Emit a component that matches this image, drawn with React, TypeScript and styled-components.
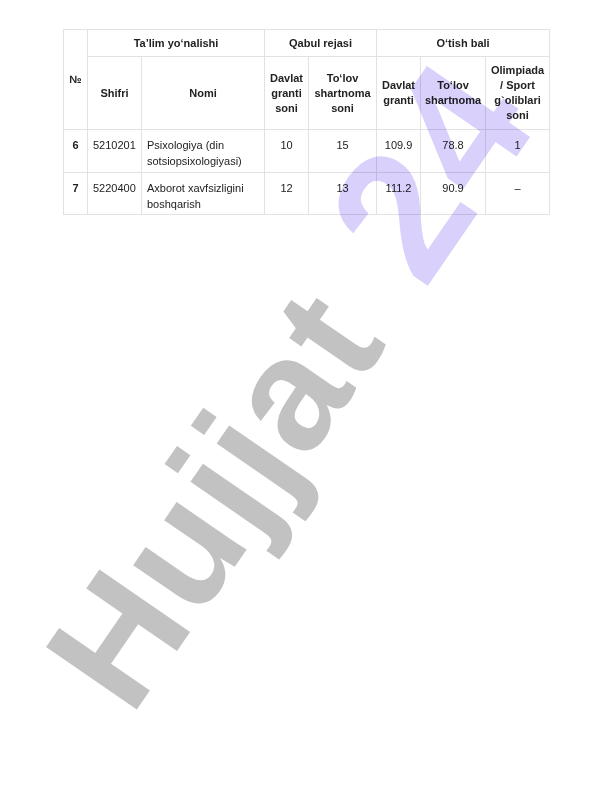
import React from "react";
import styled, { createGlobalStyle } from "styled-components";

interface Row {
  no: string;
  code: string;
  name: string;
  stateQuota: string;
  paidQuota: string;
  stateScore: string;
  paidScore: string;
  olympiad: string;
}

const rows: Row[] = [
  {
    no: "6",
    code: "5210201",
    name: "Psixologiya (din sotsiopsixologiyasi)",
    stateQuota: "10",
    paidQuota: "15",
    stateScore: "109.9",
    paidScore: "78.8",
    olympiad: "1",
  },
  {
    no: "7",
    code: "5220400",
    name: "Axborot xavfsizligini boshqarish",
    stateQuota: "12",
    paidQuota: "13",
    stateScore: "111.2",
    paidScore: "90.9",
    olympiad: "–",
  },
];

// ustun kengliklari (jami 486px)
const colWidths = [24, 54, 123, 44, 68, 44, 65, 64];

export default function App() {
  return (
    <>
      <GlobalStyle />
      <S.Page>
        <S.Table>
          <colgroup>
            {colWidths.map((w, i) => (
              <col key={i} style={{ width: w }} />
            ))}
          </colgroup>
          <thead>
            <S.TopHeadRow>
              <S.Head rowSpan={2}>№</S.Head>
              <S.Head colSpan={2}>Ta’lim yoʻnalishi</S.Head>
              <S.Head colSpan={2}>Qabul rejasi</S.Head>
              <S.Head colSpan={3}>Oʻtish bali</S.Head>
            </S.TopHeadRow>
            <S.SubHeadRow>
              <S.Head>Shifri</S.Head>
              <S.Head>Nomi</S.Head>
              <S.Head>Davlat granti soni</S.Head>
              <S.Head>Toʻlov shartnoma soni</S.Head>
              <S.Head>Davlat granti</S.Head>
              <S.Head>Toʻlov shartnoma</S.Head>
              <S.Head>Olimpiada / Sport g`oliblari soni</S.Head>
            </S.SubHeadRow>
          </thead>
          <tbody>
            {rows.map((r, i) => (
              <S.BodyRow key={r.code} tall={i === 0}>
                <S.Cell align="center" bold>
                  {r.no}
                </S.Cell>
                <S.Cell>{r.code}</S.Cell>
                <S.Cell>{r.name}</S.Cell>
                <S.Cell align="center">{r.stateQuota}</S.Cell>
                <S.Cell align="center">{r.paidQuota}</S.Cell>
                <S.Cell align="center">{r.stateScore}</S.Cell>
                <S.Cell align="center">{r.paidScore}</S.Cell>
                <S.Cell align="center">{r.olympiad}</S.Cell>
              </S.BodyRow>
            ))}
          </tbody>
        </S.Table>

        <S.Watermark aria-hidden>
          <S.MarkWord>Hujjat</S.MarkWord>
          <S.MarkNumber>24</S.MarkNumber>
        </S.Watermark>
      </S.Page>
    </>
  );
}

const GlobalStyle = createGlobalStyle`
  html, body {
    margin: 0;
    padding: 0;
    background: #ffffff;
  }
  body {
    font-family: "Liberation Sans", Arial, sans-serif;
    color: #222222;
  }
`;

const MARK_SIZE = 160;

const S = {
  Page: styled.div`
    position: relative;
    width: 612px;
    height: 792px;
    padding: 29px 63px 0;
    box-sizing: border-box;
    overflow: hidden;
  `,
  Table: styled.table`
    width: 486px;
    table-layout: fixed;
    border-collapse: collapse;
    font-size: 11px;
  `,
  TopHeadRow: styled.tr`
    height: 27px;
  `,
  SubHeadRow: styled.tr`
    height: 73px;
  `,
  Head: styled.th`
    border: 1px solid #e2e2e2;
    padding: 0 3px;
    font-weight: 700;
    line-height: 15px;
    text-align: center;
    vertical-align: middle;
  `,
  BodyRow: styled.tr<{ tall: boolean }>`
    height: ${({ tall }) => (tall ? 43 : 42)}px;
  `,
  Cell: styled.td<{ align?: "left" | "center"; bold?: boolean }>`
    border: 1px solid #e2e2e2;
    padding: 7px 5px 0 5px;
    line-height: 16px;
    vertical-align: top;
    text-align: ${({ align }) => align || "left"};
    font-weight: ${({ bold }) => (bold ? 700 : 400)};
  `,
  Watermark: styled.div`
    position: absolute;
    left: 131px;
    top: ${718 - 0.8465 * MARK_SIZE}px;
    font-family: "Liberation Sans", Arial, sans-serif;
    font-weight: 700;
    font-size: ${MARK_SIZE}px;
    line-height: 1;
    white-space: nowrap;
    transform-origin: 0 ${0.8465 * MARK_SIZE}px;
    transform: rotate(-55.5deg);
    mix-blend-mode: multiply;
    pointer-events: none;
  `,
  MarkWord: styled.span`
    color: #c2c2c2;
    letter-spacing: 2px;
  `,
  MarkNumber: styled.span`
    margin-left: 62px;
    font-size: 182px;
    line-height: 0;
    color: #d9d0fb;
    letter-spacing: 2px;
  `,
};
